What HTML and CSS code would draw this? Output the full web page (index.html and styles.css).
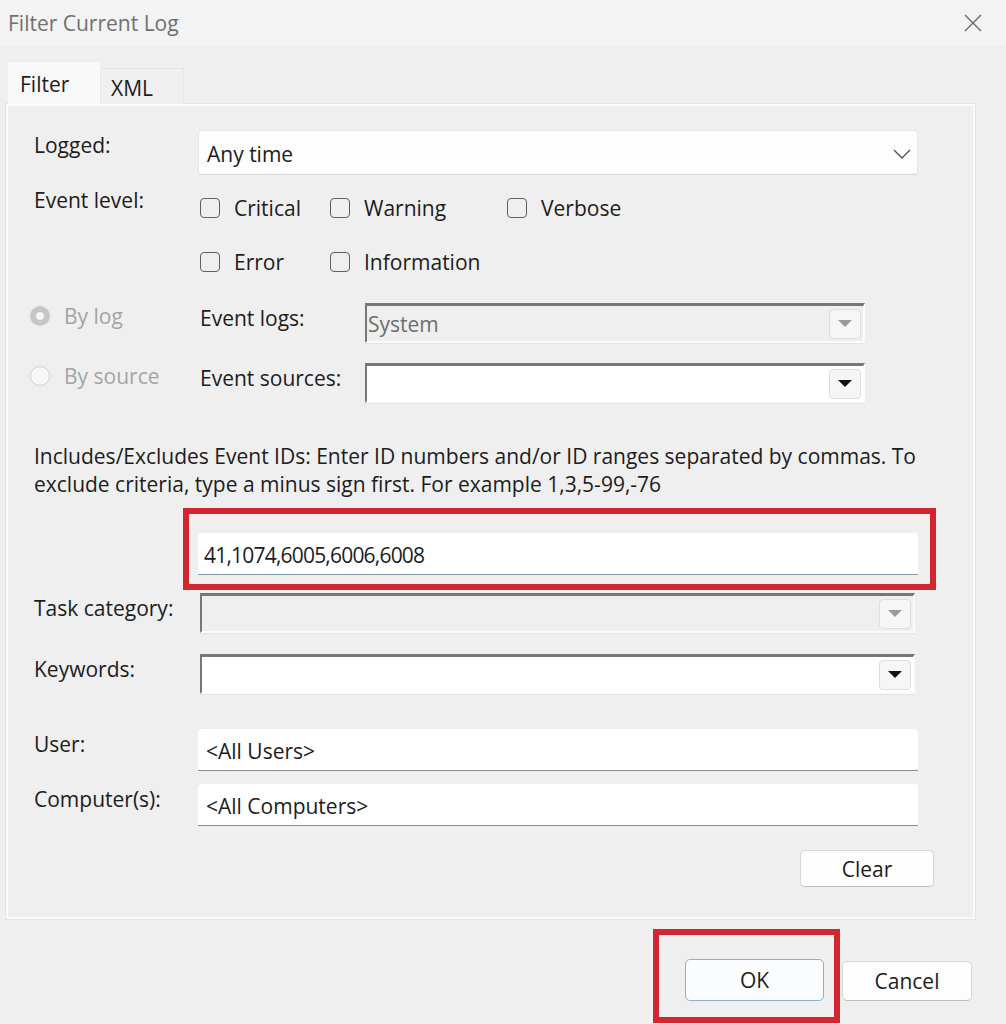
FILE: index.html
```html
<!DOCTYPE html>
<html lang="en">

<head>
    <meta charset="UTF-8">
    <title>Filter Current Log</title>
    <link rel="stylesheet" href="styles.css">
</head>

<body>
    <div class="dialog">
        <!-- title bar -->
        <div class="titlebar">
            <span class="title">Filter Current Log</span>
            <svg class="close" width="20" height="20" viewBox="0 0 20 20">
                <path d="M2 2L18 18M18 2L2 18" stroke="#6a6a6a" stroke-width="1.4" fill="none"/>
            </svg>
        </div>

        <!-- tabs -->
        <div class="tabs">
            <div class="tab active">Filter</div>
            <div class="tab">XML</div>
        </div>

        <div class="panel">
            <div class="row row-logged">
                <div class="label">Logged:</div>
                <div class="combo">
                    <span>Any time</span>
                    <svg width="18" height="10" viewBox="0 0 18 10">
                        <path d="M1 1L9 9L17 1" stroke="#555" stroke-width="1.4" fill="none"/>
                    </svg>
                </div>
            </div>

            <div class="row row-level">
                <div class="label">Event level:</div>
                <div class="checks">
                    <div class="check"><span class="box"></span>Critical</div>
                    <div class="check"><span class="box"></span>Warning</div>
                    <div class="check"><span class="box"></span>Verbose</div>
                    <div class="check"><span class="box"></span>Error</div>
                    <div class="check"><span class="box"></span>Information</div>
                </div>
            </div>

            <div class="row row-bylog">
                <div class="radio"><span class="dot checked"></span>By log</div>
                <div class="label sub">Event logs:</div>
                <div class="legacy short disabled">
                    <span>System</span>
                    <span class="drop"><i class="tri"></i></span>
                </div>
            </div>

            <div class="row row-bysource">
                <div class="radio"><span class="dot"></span>By source</div>
                <div class="label sub">Event sources:</div>
                <div class="legacy short">
                    <span></span>
                    <span class="drop"><i class="tri"></i></span>
                </div>
            </div>

            <p class="desc">Includes/Excludes Event IDs: Enter ID numbers and/or ID ranges separated by commas. To<br>exclude criteria, type a minus sign first. For example 1,3,5-99,-76</p>

            <div class="mark mark-ids">
                <div class="field ids">41,1074,6005,6006,6008</div>
            </div>

            <div class="row row-task">
                <div class="label">Task category:</div>
                <div class="legacy wide disabled">
                    <span></span>
                    <span class="drop"><i class="tri"></i></span>
                </div>
            </div>

            <div class="row row-keywords">
                <div class="label">Keywords:</div>
                <div class="legacy wide">
                    <span></span>
                    <span class="drop"><i class="tri"></i></span>
                </div>
            </div>

            <div class="row row-user">
                <div class="label">User:</div>
                <div class="field">&lt;All Users&gt;</div>
            </div>

            <div class="row row-computer">
                <div class="label">Computer(s):</div>
                <div class="field">&lt;All Computers&gt;</div>
            </div>

            <div class="clear-row">
                <button class="btn clear">Clear</button>
            </div>
        </div>

        <!-- dialog buttons -->
        <div class="footer">
            <div class="mark mark-ok">
                <button class="btn ok">OK</button>
            </div>
            <button class="btn cancel">Cancel</button>
        </div>
    </div>
</body>

</html>
```

FILE: styles.css
```css
/* dialog frame */
body {
    margin: 0;
    background-color: #efefef;
    font-family: "Open Sans", "Noto Sans", sans-serif;
    font-size: 21px;
    color: #1c1c1c;
}

.dialog {
    width: 1006px;
    height: 1024px;
    overflow: hidden;
}

.titlebar {
    height: 46px;
    background-color: #f3f3f3;
    display: flex;
    align-items: center;
    justify-content: space-between;
    padding: 0 23px 0 8px;
}

.title {
    color: #707070;
    font-size: 21px;
}

.tabs {
    display: flex;
    align-items: flex-end;
    margin-top: 16px;
    padding-left: 8px;
    height: 42px;
}

.tab {
    height: 36px;
    line-height: 38px;
    padding: 0 10px;
    width: 84px;
    box-sizing: border-box;
    background-color: #f0f0f0;
    border: 1px solid #e6e6e6;
    border-bottom: none;
}

.tab.active {
    height: 42px;
    line-height: 42px;
    width: 92px;
    background-color: #f8f8f8;
    border-color: #fbfbfb;
    padding-left: 11px;
}

.panel {
    margin-left: 6px;
    width: 969px;
    box-sizing: border-box;
    border: 2px solid #fafafa;
    box-shadow: 0 0 0 1px #e4e4e4;
    padding: 0 0 30px 26px;
}

/* form rows */
.row {
    display: flex;
    align-items: flex-start;
}

.label {
    width: 164px;
    line-height: 30px;
    flex-shrink: 0;
}

.label.sub {
    width: 165px;
}

.row-logged { margin-top: 24px; }
.row-level { margin-top: 10px; }
.row-bylog { margin-top: 26px; margin-left: -4px; }
.row-bysource { margin-top: 20px; margin-left: -4px; }
.row-task { margin-top: 3px; }
.row-keywords { margin-top: 21px; }
.row-user { margin-top: 35px; }
.row-computer { margin-top: 13px; }

.row-task .label,
.row-keywords .label {
    width: 166px;
}

.combo {
    width: 720px;
    height: 45px;
    box-sizing: border-box;
    background-color: #fdfdfd;
    border: 1px solid #e6e6e6;
    border-bottom-color: #d4d4d4;
    border-radius: 4px;
    display: flex;
    align-items: center;
    justify-content: space-between;
    padding: 2px 6px 0 8px;
}

/* checkboxes */
.checks {
    display: grid;
    grid-template-columns: 130px 177px auto;
    row-gap: 24px;
    padding-top: 8px;
}

.check {
    display: flex;
    align-items: center;
    height: 30px;
    margin-left: 2px;
}

.box {
    width: 20px;
    height: 20px;
    box-sizing: border-box;
    border: 1.5px solid #5f5f5f;
    border-radius: 4px;
    margin-right: 14px;
}

/* radios (disabled) */
.radio {
    width: 170px;
    line-height: 30px;
    display: flex;
    align-items: center;
    color: #a4a4a4;
    flex-shrink: 0;
    margin-top: -2px;
}

.dot {
    width: 20px;
    height: 20px;
    box-sizing: border-box;
    border-radius: 50%;
    border: 1.5px solid #d2d2d2;
    background-color: #f7f7f7;
    margin-right: 14px;
}

.dot.checked {
    border: 6px solid #c6c6c6;
    background-color: #f4f4f4;
}

/* classic combo boxes */
.legacy {
    height: 40px;
    box-sizing: border-box;
    background-color: #fff;
    border-top: 3px solid #777;
    border-left: 2px solid #777;
    border-bottom: 2px solid #fbfbfb;
    border-right: 2px solid #fbfbfb;
    box-shadow: 0 1px 0 #e4e4e4;
    display: flex;
    align-items: center;
    justify-content: space-between;
    padding-right: 2px;
}

.legacy.short { width: 500px; }
.legacy.wide { width: 715px; }

.legacy.disabled {
    background-color: #efefef;
    color: #6d6d6d;
}

.legacy span:first-child {
    padding-left: 1px;
}

.drop {
    width: 32px;
    height: 30px;
    box-sizing: border-box;
    border: 1px solid #dedede;
    border-radius: 4px;
    background-color: #f6f6f6;
    display: flex;
    align-items: center;
    justify-content: center;
}

.tri {
    width: 0;
    height: 0;
    border-left: 7px solid transparent;
    border-right: 7px solid transparent;
    border-top: 7px solid #111;
}

.disabled .tri {
    border-top-color: #9a9a9a;
}

.desc {
    margin: 39px 0 0;
    line-height: 28px;
}

/* text fields */
.field {
    width: 720px;
    height: 42px;
    box-sizing: border-box;
    background-color: #fff;
    border-bottom: 1.5px solid #8c8c8c;
    border-radius: 4px 4px 0 0;
    display: flex;
    align-items: center;
    padding: 2px 8px 0;
}

.field.ids {
    border-bottom-color: #7f98ad;
    padding-left: 6px;
    letter-spacing: -0.8px;
}

/* red highlight annotations */
.mark {
    border: 6px solid #d12530;
}

.mark-ids {
    width: 753px;
    box-sizing: border-box;
    margin: 10px 0 0 149px;
    padding: 19px 12px 9px 9px;
}

.mark-ok {
    padding: 24px 10px 16px 26px;
}

/* buttons */
.btn {
    font-family: inherit;
    font-size: 21px;
    color: #1c1c1c;
    background-color: #fdfdfd;
    border: 1px solid #d6d6d6;
    border-bottom-color: #bdbdbd;
    border-radius: 5px;
    cursor: pointer;
}

.clear-row {
    display: flex;
    justify-content: flex-end;
    margin-top: 24px;
    padding-right: 39px;
}

.clear {
    width: 134px;
    height: 37px;
}

.footer {
    display: flex;
    justify-content: flex-end;
    align-items: flex-end;
    margin-top: 10px;
    padding-right: 34px;
}

.ok {
    width: 139px;
    height: 42px;
    border-color: #8fb0cc;
    background-color: #fbfcfd;
}

.cancel {
    width: 130px;
    height: 40px;
    margin: 0 0 22px 2px;
}
```
